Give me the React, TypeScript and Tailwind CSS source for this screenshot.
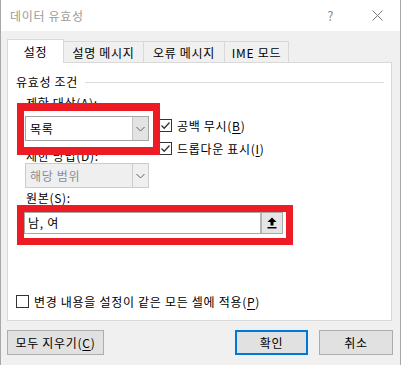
import React from "react";

const U = ({ c }: { c: string }) => <span className="underline underline-offset-[2px]">{c}</span>;

const Check = ({ checked }: { checked?: boolean }) => (
  <div className="w-[13px] h-[13px] border border-[#333333] bg-white flex items-center justify-center shrink-0">
    {checked && (
      <svg width="11" height="11" viewBox="0 0 11 11">
        <path d="M1.5 5.5 L4.2 8.2 L9.5 2.5" fill="none" stroke="#333333" strokeWidth="1.3" />
      </svg>
    )}
  </div>
);

const Chevron = ({ color }: { color: string }) => (
  <svg width="9" height="6" viewBox="0 0 9 6">
    <path d="M0.5 1 L4.5 5 L8.5 1" fill="none" stroke={color} strokeWidth="1" />
  </svg>
);

export default function App() {
  return (
    <div className="w-[401px] h-[365px] flex flex-col border-x border-[#a8a8a8] font-['Noto_Sans_CJK_KR','Noto_Sans',sans-serif] text-[12px] tracking-[0.7px] text-black overflow-hidden">
      {/* Title bar */}
      <div className="h-[31px] bg-white flex items-center shrink-0">
        <span className="ml-[9px] text-[#9a9a9a] text-[12px] leading-[16px]">데이터 유효성</span>
        <div className="flex-1" />
        <span className="text-[#8a8a8a] text-[13px] leading-[16px] mr-[38px]">?</span>
        <svg width="11" height="11" viewBox="0 0 11 11" className="mr-[17px]">
          <path d="M0.5 0.5 L10.5 10.5 M10.5 0.5 L0.5 10.5" stroke="#7a7a7a" strokeWidth="1" />
        </svg>
      </div>

      {/* Body */}
      <div className="flex-1 bg-[#f0f0f0] flex flex-col">
        {/* Tabs */}
        <div className="mt-[8px] ml-[6px] h-[23px] flex items-end">
          <div className="relative z-10 w-[57px] h-[24px] -mb-px bg-white border border-b-0 border-[#d9d9d9] flex items-center justify-center leading-[16px]">
            설정
          </div>
          <div className="w-[80px] h-[21px] border-t border-r border-[#d9d9d9] flex items-center justify-center leading-[16px] pt-px">
            설명 메시지
          </div>
          <div className="w-[81px] h-[21px] border-t border-r border-[#d9d9d9] flex items-center justify-center leading-[16px] pt-px">
            오류 메시지
          </div>
          <div className="w-[64px] h-[21px] border-t border-r border-[#d9d9d9] flex items-center justify-center leading-[16px] pt-px">
            IME 모드
          </div>
        </div>

        {/* Panel */}
        <div className="relative ml-[6px] w-[385px] h-[259px] bg-white border border-[#d9d9d9] flex flex-col">
          <div className="mt-[11px] h-[16px] flex items-center pl-[8px]">
            <span className="leading-[16px]">유효성 조건</span>
            <div className="flex-1 h-px bg-[#dcdcdc] ml-[7px] mr-[7px]" />
          </div>

          <div className="mt-[5px] flex">
            <div className="ml-[17px] w-[124px] flex flex-col">
              <div className="h-[16px] leading-[16px] pl-[1px]">
                제한 대상(<U c="A" />):
              </div>
              <div className="mt-[5px] h-[25px] border border-[#a6a6a6] bg-white flex">
                <div className="flex-1 flex items-center pl-[4px] leading-[16px]">목록</div>
                <div className="w-[16px] bg-[#e3e3e3] border-l border-[#c4c4c4] flex items-center justify-center">
                  <Chevron color="#606060" />
                </div>
              </div>
              <div className="mt-[7px] h-[15px] leading-[15px] pl-[1px]">
                제한 방법(<U c="D" />):
              </div>
              <div className="h-[25px] border border-[#cccccc] bg-[#efefef] flex">
                <div className="flex-1 flex items-center pl-[4px] leading-[16px] text-[#8d8d8d]">해당 범위</div>
                <div className="w-[16px] border-l border-[#cccccc] flex items-center justify-center">
                  <Chevron color="#606060" />
                </div>
              </div>
            </div>
            <div className="ml-[10px] pt-[22px] flex flex-col gap-[6px]">
              <div className="h-[17px] flex items-center gap-[5px]">
                <Check checked />
                <span className="leading-[16px]">
                  공백 무시(<U c="B" />)
                </span>
              </div>
              <div className="h-[17px] flex items-center gap-[5px]">
                <Check checked />
                <span className="leading-[16px]">
                  드롭다운 표시(<U c="I" />)
                </span>
              </div>
            </div>
          </div>

          <div className="mt-[2px] ml-[18px] h-[16px] leading-[16px]">
            원본(<U c="S" />):
          </div>
          <div className="mt-[6px] ml-[16px] w-[259px] h-[22px] border border-[#a9a9a9] bg-white flex">
            <div className="flex-1 flex items-center pl-[3px] leading-[16px]">남, 여</div>
            <div className="w-[22px] bg-[#e5e5e5] border-l-2 border-[#b5b5b5] flex items-center justify-center">
              <svg width="10" height="12" viewBox="0 0 10 12">
                <path d="M5 0.5 L9.5 5 L6.5 5 L6.5 8.5 L3.5 8.5 L3.5 5 L0.5 5 Z" fill="#000" />
                <rect x="0.5" y="10" width="9" height="1.5" fill="#000" />
              </svg>
            </div>
          </div>

          <div className="flex-1" />

          <div className="ml-[8px] mb-[10px] h-[17px] flex items-center gap-[5px]">
            <Check />
            <span className="leading-[16px]">
              변경 내용을 설정이 같은 모든 셀에 적용(<U c="P" />)
            </span>
          </div>

          {/* Red annotation boxes */}
          <div className="absolute left-[9px] top-[40px] w-[143px] h-[52px] border-x-[7px] border-y-[8px] border-[#ed1c24]" />
          <div className="absolute left-[9px] top-[142px] w-[276px] h-[40px] border-[7px] border-[#ed1c24]" />
        </div>

        {/* Buttons */}
        <div className="mt-[9px] flex h-[25px]">
          <div className="ml-[6px] w-[97px] h-[25px] bg-[#e1e1e1] border border-[#adadad] flex items-center justify-center leading-[16px]">
            모두 지우기(<U c="C" />)
          </div>
          <div className="flex-1" />
          <div className="w-[73px] h-[25px] bg-[#e1e1e1] border-2 border-[#0078d7] flex items-center justify-center leading-[16px]">
            확인
          </div>
          <div className="ml-[11px] mr-[7px] w-[74px] h-[25px] bg-[#e1e1e1] border border-[#adadad] flex items-center justify-center leading-[16px]">
            취소
          </div>
        </div>
      </div>
    </div>
  );
}
